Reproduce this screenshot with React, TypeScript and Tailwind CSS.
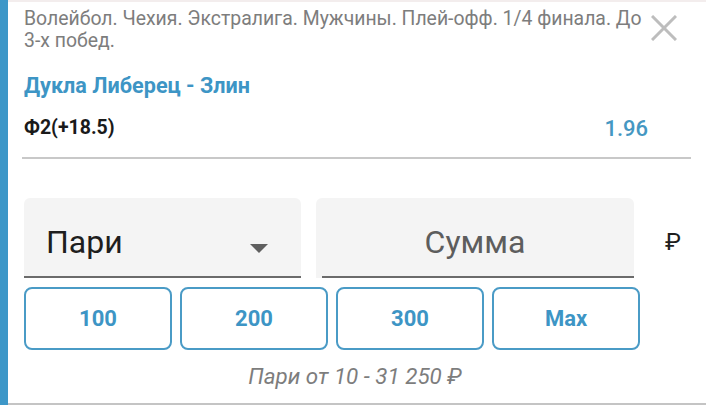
import React from 'react';

const amounts = ['100', '200', '300', 'Max'];

export default function App() {
  return (
    <div
      className="flex w-[706px] h-[405px] bg-white overflow-hidden"
      style={{ fontFamily: 'Roboto, "Noto Sans", Arial, sans-serif' }}
    >
      <div className="w-[8px] shrink-0 bg-[#3d97c8]" />
      <div className="flex-1 flex flex-col border-t-2 border-t-[#f3eded] border-b-2 border-b-[#c4c4c4]">
        <div className="flex pl-[16px] pr-[29px] pt-[6px]">
          <p className="flex-1 text-[19.4px] leading-[22px] text-[#7d7d7d]">
            Волейбол. Чехия. Экстралига. Мужчины. Плей-офф. 1/4 финала. До 3-х побед.
          </p>
          <button className="ml-[2px] mt-[7px] w-[26px] h-[26px] shrink-0">
            <svg viewBox="0 0 26 26" width="26" height="26">
              <path d="M1 1L25 25M25 1L1 25" stroke="#bdbdbd" strokeWidth="3" />
            </svg>
          </button>
        </div>
        <div className="pl-[16px] mt-[21px] text-[21.6px] leading-[26px] font-bold text-[#3d95c5]">
          Дукла Либерец - Злин
        </div>
        <div className="flex items-center h-[26px] pl-[16px] pr-[58px] mt-[16px]">
          <span className="flex-1 text-[19.5px] font-bold text-[#1a1a1a]">Ф2(+18.5)</span>
          <span className="text-[22px] font-medium text-[#4597c2]">1.96</span>
        </div>
        <div className="ml-[14px] mr-[15px] mt-[16px] h-[2px] bg-[#c8c8c8]" />
        <div className="flex items-center pl-[16px] mt-[39px]">
          <div className="w-[277px] h-[80px] bg-[#f4f4f4] rounded-t-[6px] border-b-2 border-[#6b6b6b] flex items-center pl-[22px] pr-[33px] pt-[10px]">
            <span className="flex-1 text-[32px] leading-[38px] text-[#1e1e1e]">Пари</span>
            <svg width="18" height="9" viewBox="0 0 18 9" className="mt-[12px]">
              <path d="M0 0H18L9 9Z" fill="#5f5f5f" />
            </svg>
          </div>
          <div className="ml-[15px] w-[318px] h-[80px] bg-[#f4f4f4] rounded-t-[6px] flex flex-col">
            <div className="flex-1 flex items-center justify-center pt-[10px] text-[32px] leading-[38px] text-[#5d5d5d]">
              Сумма
            </div>
            <div className="ml-[6px] h-[2px] bg-[#6b6b6b]" />
          </div>
          <span className="ml-[31px] mt-[8px] text-[24px] text-[#1e1e1e]">₽</span>
        </div>
        <div className="flex gap-[8px] pl-[16px] mt-[9px]">
          {amounts.map((a) => (
            <button
              key={a}
              className="w-[148px] h-[63px] rounded-[8px] border-2 border-[#4a9bc6] text-[22px] font-bold text-[#3d95c5]"
            >
              {a}
            </button>
          ))}
        </div>
        <div className="mt-[13px] pr-[4px] text-center italic text-[22.4px] leading-[26px] text-[#7d7d7d]">
          Пари от 10 - 31 250 ₽
        </div>
      </div>
    </div>
  );
}
